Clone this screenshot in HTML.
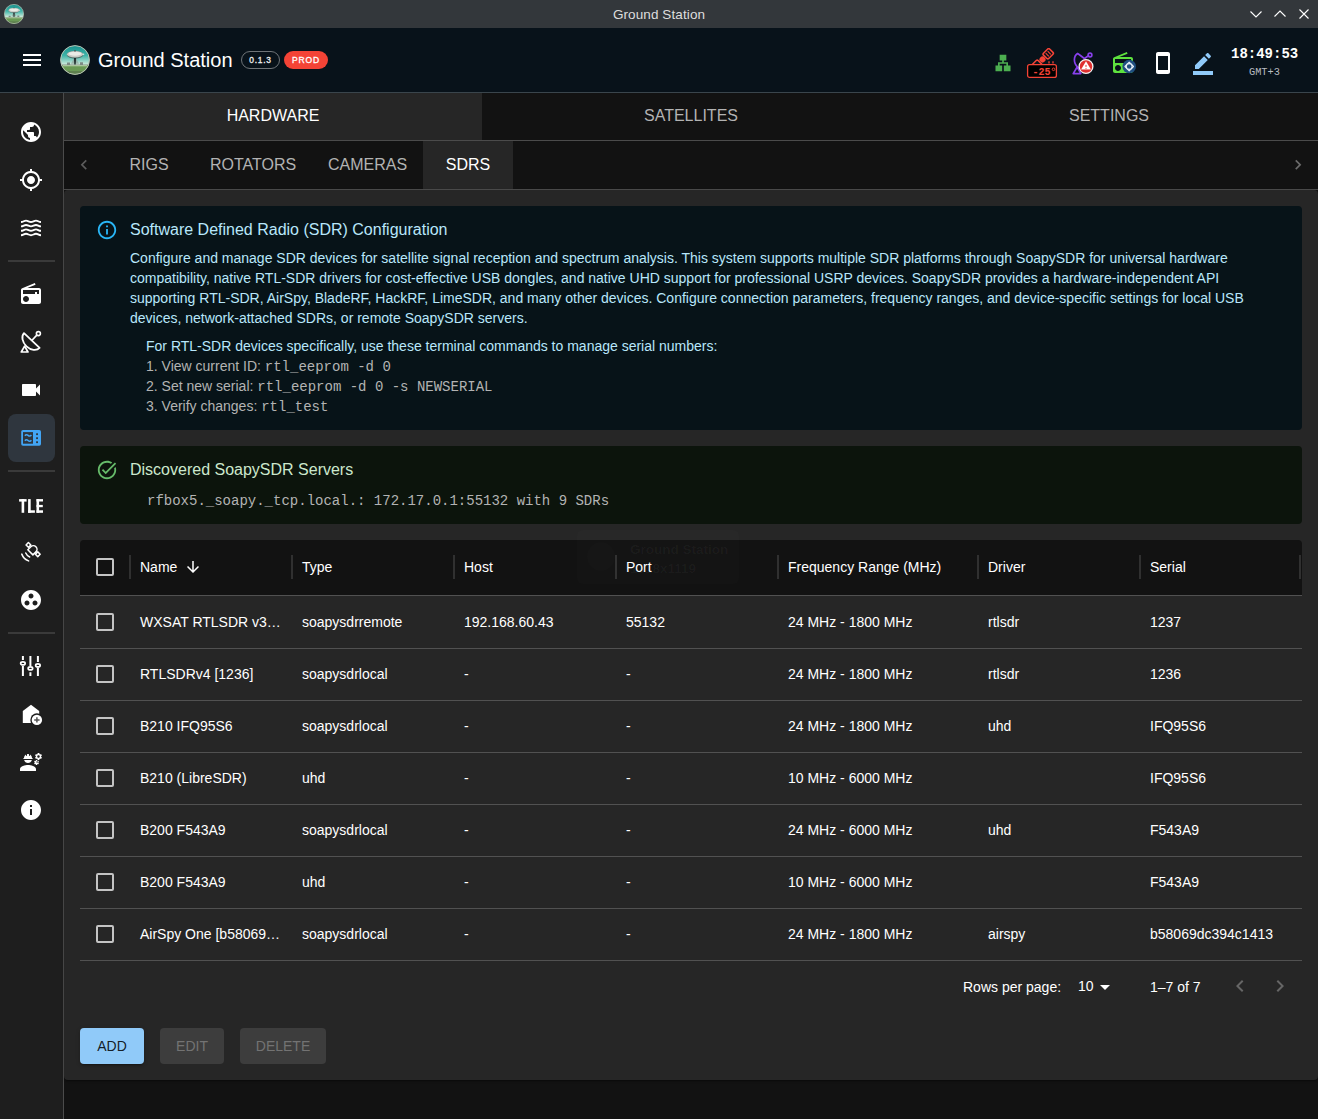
<!DOCTYPE html>
<html><head><meta charset="utf-8">
<style>
*{box-sizing:border-box;margin:0;padding:0}
html,body{width:1318px;height:1119px;overflow:hidden;background:#121212;font-family:"Liberation Sans",sans-serif;color:#fff}
.abs{position:absolute}
svg{display:block}
#titlebar{left:0;top:0;width:1318px;height:28px;background:#33373b}
#titlebar .t{position:absolute;left:0;width:1318px;top:7px;text-align:center;font-size:13.5px;color:#dedede;letter-spacing:0.1px}
#header{left:0;top:28px;width:1318px;height:65px;background:#08121a;border-bottom:1px solid #3a454c}
#sidebar{left:0;top:93px;width:64px;height:1026px;background:#1e1e1e;border-right:1px solid #4b4b4b}
.sdiv{position:absolute;left:8px;width:47px;height:2px;background:#3a3a3a}
.sic{position:absolute;left:21px;width:20px;height:20px}
#tabs{left:64px;top:93px;width:1254px;height:48px;background:#121212;border-bottom:1px solid #4b4b4b}
.tab{position:absolute;top:0;height:47px;line-height:46px;text-align:center;font-size:16px;color:#b3b3b3}
#subtabs{left:64px;top:141px;width:1254px;height:49px;background:#121212;border-bottom:1px solid #4b4b4b}
.stab{position:absolute;top:0;height:48px;line-height:48px;text-align:center;font-size:16px;color:#b3b3b3}
#card{left:64px;top:190px;width:1254px;height:890px;background:#262626;border-radius:4px;box-shadow:0 2px 1px -1px rgba(0,0,0,0.2),0 1px 1px 0 rgba(0,0,0,0.14),0 1px 3px 0 rgba(0,0,0,0.12)}
.alert{position:absolute;left:16px;width:1222px;border-radius:4px}
.mono{font-family:"Liberation Mono",monospace}
table{border-collapse:collapse}
.th{position:absolute;top:-1px;height:56px;line-height:56px;font-size:14px;color:#fff}
.row{position:absolute;left:0;width:1222px;height:52px}
.rl{position:absolute;left:0;width:1222px;height:1px;background:#515151}
.cell{position:absolute;top:0;line-height:52px;font-size:14px;color:#fff;white-space:nowrap}
.cb{position:absolute;left:16px;width:18px;height:18px;border:2px solid #c4c4c4;border-radius:2px}
.btn{position:absolute;top:838px;height:36px;line-height:36px;border-radius:4px;font-size:14px;text-align:center}
</style></head><body>
<svg width="0" height="0" style="position:absolute"><defs>
    
      <linearGradient id="sky" x1="0" y1="0" x2="0" y2="1"><stop offset="0" stop-color="#168f8c"/><stop offset="0.35" stop-color="#3fb3a8"/><stop offset="0.62" stop-color="#bfe6d6"/><stop offset="0.68" stop-color="#e8f2e4"/><stop offset="0.72" stop-color="#b9d6a6"/><stop offset="1" stop-color="#3f7d33"/></linearGradient>
      <clipPath id="lc"><circle cx="15" cy="15" r="14.5"/></clipPath>
    
    <symbol id="logo" viewBox="0 0 30 30"><g clip-path="url(#lc)">
      <rect width="30" height="30" fill="url(#sky)"/>
      <path d="M2 19.5 h5 v-2 h3 v2 h10 v-2.2 h3 v2.2 h5 v1.2 H2z" fill="#7d8a84"/>
      <path d="M11 18.8 L14 13 L16 13 L19 18.8z" fill="#8fa39a" opacity=".7"/>
      <ellipse cx="15" cy="9.8" rx="8.2" ry="3.9" fill="#4d6e6a"/>
      <ellipse cx="15" cy="9.2" rx="8" ry="3.2" fill="#c9ccc6"/>
      <ellipse cx="15" cy="8.7" rx="6.5" ry="2" fill="#e9ebe6"/>
      <circle cx="15" cy="5.8" r="0.9" fill="#4a5a56"/>
      <circle cx="23.5" cy="9.2" r="0.8" fill="#d8e6df"/>
      <path d="M14 13 h2 l-0.3 6.5 h-1.4z" fill="#1d2b2a"/>
      <path d="M2 20.3 h26 v10 H2z" fill="#6a9a55"/>
      <path d="M3 20.2 h24 v1 H3z" fill="#cfe3c6" opacity=".8"/>
      <path d="M4 26 h22 v4 H4z" fill="#55704a" opacity=".6"/>
    </g>
    <circle cx="15" cy="15" r="14.4" fill="none" stroke="#b9c2b4" stroke-width="1"/>
  </symbol></defs></svg>
<div id="titlebar" class="abs"><div class="t">Ground Station</div>
  <svg class="abs" style="left:4px;top:4px" width="20" height="20" viewBox="0 0 30 30"><use href="#logo"/></svg>
  <svg class="abs" style="left:1246px;top:6px" width="70" height="16" viewBox="0 0 70 16">
    <path d="M4.5 5.5 L10 11 L15.5 5.5" fill="none" stroke="#fff" stroke-width="1.1"/>
    <path d="M28.5 10.5 L34 5 L39.5 10.5" fill="none" stroke="#fff" stroke-width="1.1"/>
    <path d="M53.5 3.5 L62.5 12.5 M62.5 3.5 L53.5 12.5" fill="none" stroke="#fff" stroke-width="1.1"/>
  </svg>
</div>
<div id="header" class="abs">
  <svg class="abs" style="left:20px;top:20px" width="24" height="24" viewBox="0 0 24 24"><path fill="#fff" d="M3 18h18v-2H3v2zm0-5h18v-2H3v2zm0-7v2h18V6H3z"/></svg>
  <svg class="abs" style="left:60px;top:17px" width="30" height="30" viewBox="0 0 30 30"><use href="#logo"/></svg>
  <div class="abs" style="left:98px;top:21.5px;font-size:20px;line-height:20px;color:#fff;white-space:nowrap">Ground Station</div>
  <div class="abs" style="left:241px;top:23px;width:39px;height:18px;border:1px solid #6f7478;border-radius:9px;font-size:8.4px;font-weight:normal;-webkit-text-stroke:0.3px #f0f0f0;letter-spacing:0.75px;line-height:16.6px;text-align:center;color:#f0f0f0">0.1.3</div>
  <div class="abs" style="left:284px;top:23px;width:44px;height:18px;background:#f44336;border-radius:9px;font-size:8.5px;font-weight:normal;-webkit-text-stroke:0.3px #fff;letter-spacing:0.85px;line-height:18.6px;text-align:center;color:#fff">PROD</div>
  <!-- lan -->
  <svg class="abs" style="left:993px;top:25px" width="20" height="20" viewBox="0 0 24 24"><path fill="#4caf50" d="M13 22h8v-7h-3v-4h-5V9h3V2H8v7h3v2H6v4H3v7h8v-7H8v-2h8v2h-3z"/></svg>
  <!-- satellite -25 -->
  <svg class="abs" style="left:1026px;top:20px" width="32" height="32" viewBox="0 0 32 32">
    <g transform="rotate(-45 16.5 11.5)">
      <rect x="20.3" y="7.8" width="8.6" height="7.4" rx="1.3" fill="none" stroke="#f44336" stroke-width="1.6"/>
      <path d="M23.2 9.3v4.4M26 9.3v4.4" stroke="#f44336" stroke-width="1.1"/>
      <circle cx="16.5" cy="11.5" r="3" fill="#f44336"/>
      <rect x="4.1" y="7.8" width="8.6" height="7.4" rx="1.3" fill="none" stroke="#f44336" stroke-width="1.6"/>
    </g>
    <path d="M23 13.2v2.4M27 13.2v2.4" stroke="#f44336" stroke-width="1.3"/>
    <rect x="1.6" y="16.6" width="28.8" height="12.8" rx="2" fill="#000" stroke="#f44336" stroke-width="1.3"/>
    <text x="6.6" y="26.9" font-family="Liberation Mono" font-weight="bold" font-size="10" fill="#f44336">-25</text>
    <circle cx="27.5" cy="21.3" r="1.3" fill="none" stroke="#f44336" stroke-width="0.9"/>
  </svg>
  <!-- dish warning -->
  <svg class="abs" style="left:1072px;top:24px" width="24" height="24" viewBox="0 0 24 24">
    <path d="M5.6 1.6 C1.5 4 1 11 6 15.5 C8 17 10.5 15 12.5 12.5" fill="none" stroke="#8840ec" stroke-width="1.7" stroke-linecap="round"/>
    <path d="M5.6 1.6 C8 3 10 5 12.5 6.5 C14 5.5 15.5 4.5 16.5 3.8" fill="none" stroke="#8840ec" stroke-width="1.7" stroke-linecap="round"/>
    <circle cx="18" cy="3" r="1.9" fill="none" stroke="#8840ec" stroke-width="1.6"/>
    <path d="M1.2 21.6 L5.2 15 L8.8 21.6z" fill="none" stroke="#8840ec" stroke-width="1.7" stroke-linejoin="round"/>
    <circle cx="14" cy="14.5" r="6.9" fill="#e03030" stroke="#f4f4f4" stroke-width="1.3"/>
    <path d="M14 9.3 L18.9 17.6 L9.1 17.6z" fill="#fff"/>
    <rect x="9.6" y="17.9" width="8.8" height="1.4" fill="#e03030"/>
    <path d="M14 12.9 v2 M14 15.9 v0.9" stroke="#e03030" stroke-width="1"/>
  </svg>
  <!-- radio target -->
  <svg class="abs" style="left:1111px;top:23px" width="26" height="24" viewBox="0 0 26 24">
    <path fill="#5ee23e" d="M3.24 6.15C2.51 6.43 2 7.17 2 8v12c0 1.1.89 2 2 2h16c1.11 0 2-.9 2-2V8c0-1.11-.89-2-2-2H8.3l8.26-3.34L15.88 1 3.24 6.15zM7 20c-1.66 0-3-1.34-3-3s1.34-3 3-3 3 1.34 3 3-1.34 3-3 3zm13-8h-2v-2h-2v2H4V8h16v4z"/>
    <rect x="15.5" y="9.5" width="3" height="3" fill="#08121a"/>
    <circle cx="18.2" cy="15.5" r="6.8" fill="#1f4f80"/>
    <path d="M18.2 11.2 L22.5 15.5 L18.2 19.8 L13.9 15.5z" fill="none" stroke="#e8f0f8" stroke-width="1.1" stroke-linejoin="round"/>
    <circle cx="18.2" cy="15.5" r="2.9" fill="#1f4f80" stroke="#e8f0f8" stroke-width="1.1"/>
  </svg>
  <!-- phone -->
  <svg class="abs" style="left:1151px;top:23px" width="24" height="24" viewBox="0 0 24 24"><path fill="#fff" d="M17 1.01 7 1c-1.1 0-1.99.9-1.99 2v18c0 1.1.89 2 1.99 2h10c1.1 0 2-.9 2-2V3c0-1.1-.9-1.99-2-1.99zM17 19H7V5h10v14z"/></svg>
  <!-- pencil -->
  <svg class="abs" style="left:1191px;top:22.5px" width="24" height="24" viewBox="0 0 24 24"><path fill="#90caf9" d="M22 24H2v-4h20v4zM13.06 5.19l3.75 3.75L7.75 18H4v-3.75l9.06-9.06zm4.82 2.68-3.75-3.75 1.83-1.83c.39-.39 1.02-.39 1.41 0l2.34 2.34c.39.39.39 1.02 0 1.41l-1.83 1.83z"/></svg>
  <div class="abs mono" style="left:1231px;top:18.7px;font-size:14px;line-height:14px;font-weight:bold;color:#fff;white-space:nowrap">18:49:53</div>
  <div class="abs mono" style="left:1249px;top:38.5px;font-size:10.3px;line-height:10px;color:#b8bcc0;white-space:nowrap">GMT+3</div>
</div>
<div id="sidebar" class="abs"><div class="abs" style="left:0;top:-1px;width:64px;height:1000px">
<svg class="abs" style="left:19.0px;top:28.0px" width="24" height="24" viewBox="0 0 24 24"><path fill="#fff" d="M12 2C6.48 2 2 6.48 2 12s4.48 10 10 10 10-4.48 10-10S17.52 2 12 2zm-1 17.93c-3.95-.49-7-3.85-7-7.93 0-.62.08-1.21.21-1.79L9 15v1c0 1.1.9 2 2 2v1.93zm6.9-2.54c-.26-.81-1-1.39-1.9-1.39h-1v-3c0-.55-.45-1-1-1H8v-2h2c.55 0 1-.45 1-1V7h2c1.1 0 2-.9 2-2v-.41c2.93 1.19 5 4.06 5 7.41 0 2.08-.8 3.97-2.1 5.39z"/></svg>
<svg class="abs" style="left:19.0px;top:76.0px" width="24" height="24" viewBox="0 0 24 24"><path fill="#fff" d="M12 8c-2.21 0-4 1.79-4 4s1.79 4 4 4 4-1.79 4-4-1.79-4-4-4zm8.94 3c-.46-4.17-3.77-7.48-7.94-7.94V1h-2v2.06C6.83 3.52 3.52 6.83 3.06 11H1v2h2.06c.46 4.17 3.77 7.48 7.94 7.94V23h2v-2.06c4.17-.46 7.48-3.77 7.94-7.94H23v-2h-2.06zM12 19c-3.87 0-7-3.13-7-7s3.13-7 7-7 7 3.13 7 7-3.13 7-7 7z"/></svg>
<svg class="abs" style="left:19.0px;top:124.0px" width="24" height="24" viewBox="0 0 24 24"><path d="M2 6.0 C4.5 6.0 5 4.6 7 4.6 C9 4.6 10 6.0 12 6.0 C14 6.0 15 4.6 17 4.6 C19 4.6 19.5 6.0 22 6.0" fill="none" stroke="#fff" stroke-width="1.9"/><path d="M2 10.4 C4.5 10.4 5 9.0 7 9.0 C9 9.0 10 10.4 12 10.4 C14 10.4 15 9.0 17 9.0 C19 9.0 19.5 10.4 22 10.4" fill="none" stroke="#fff" stroke-width="1.9"/><path d="M2 14.8 C4.5 14.8 5 13.4 7 13.4 C9 13.4 10 14.8 12 14.8 C14 14.8 15 13.4 17 13.4 C19 13.4 19.5 14.8 22 14.8" fill="none" stroke="#fff" stroke-width="1.9"/><path d="M2 19.2 C4.5 19.2 5 17.8 7 17.8 C9 17.8 10 19.2 12 19.2 C14 19.2 15 17.8 17 17.8 C19 17.8 19.5 19.2 22 19.2" fill="none" stroke="#fff" stroke-width="1.9"/></svg>
<div class="sdiv" style="top:168px"></div>
<svg class="abs" style="left:19.0px;top:190.0px" width="24" height="24" viewBox="0 0 24 24"><path fill="#fff" d="M3.24 6.15C2.51 6.43 2 7.17 2 8v12c0 1.1.89 2 2 2h16c1.11 0 2-.9 2-2V8c0-1.11-.89-2-2-2H8.3l8.26-3.34L15.88 1 3.24 6.15zM7 20c-1.66 0-3-1.34-3-3s1.34-3 3-3 3 1.34 3 3-1.34 3-3 3zm13-8h-2v-2h-2v2H4V8h16v4z"/></svg>
<svg class="abs" style="left:19.0px;top:238.0px" width="24" height="24" viewBox="0 0 24 24"><path d="M5 3.2 A10.6 7.8 44 0 0 20.6 17.8 Z" fill="none" stroke="#fff" stroke-width="1.8" stroke-linejoin="round"/>
<path d="M12.8 10.5 L17.8 5.2" stroke="#fff" stroke-width="1.7"/>
<circle cx="19.4" cy="3.6" r="2" fill="none" stroke="#fff" stroke-width="1.6"/>
<path d="M2.3 22 L5.6 16.2 L9 22z" fill="none" stroke="#fff" stroke-width="1.7" stroke-linejoin="round"/></svg>
<svg class="abs" style="left:19.0px;top:286.0px" width="24" height="24" viewBox="0 0 24 24"><path fill="#fff" d="M17 10.5V7c0-.55-.45-1-1-1H4c-.55 0-1 .45-1 1v10c0 .55.45 1 1 1h12c.55 0 1-.45 1-1v-3.5l4 4v-11l-4 4z"/></svg>
<div class="abs" style="left:8px;top:322px;width:47px;height:48px;border-radius:8px;background:#2f363e"></div>
<svg class="abs" style="left:19.0px;top:334.0px" width="24" height="24" viewBox="0 0 24 24"><rect x="2.2" y="4" width="19.8" height="15.8" rx="1.8" fill="#42a5f5"/>
<rect x="4" y="6.1" width="10" height="11.6" fill="#2f363e"/>
<rect x="17.1" y="7.3" width="1.9" height="1.8" fill="#2f363e"/><rect x="17.1" y="11.3" width="1.9" height="1.8" fill="#2f363e"/><rect x="17.1" y="15.3" width="1.9" height="1.8" fill="#2f363e"/>
<path d="M5.9 9.7 c1 -1.3 2.1 -1.3 3.2 -0.3 c1.1 1 2.2 1 3.3 -0.3 M5.9 14.8 c1 -1.3 2.1 -1.3 3.2 -0.3 c1.1 1 2.2 1 3.3 -0.3" fill="none" stroke="#42a5f5" stroke-width="1.5"/></svg>
<div class="sdiv" style="top:378px"></div>
<svg class="abs" style="left:0;top:398px" width="64" height="30" viewBox="0 490 64 30"><g fill="#fff">
<rect x="19.1" y="499.1" width="7.5" height="2.5"/><rect x="21.6" y="499.1" width="2.6" height="13.7"/>
<rect x="28.1" y="499.1" width="2.6" height="13.7"/><rect x="28.1" y="510.3" width="6.8" height="2.5"/>
<rect x="36.5" y="499.1" width="2.6" height="13.7"/><rect x="36.5" y="499.1" width="6.5" height="2.4"/><rect x="36.5" y="504.9" width="6.3" height="2.3"/><rect x="36.5" y="510.3" width="6.5" height="2.5"/>
</g></svg>
<svg class="abs" style="left:19.0px;top:448.0px" width="24" height="24" viewBox="0 0 24 24"><g transform="translate(14.1 9.6) rotate(45)" fill="none" stroke="#fff" stroke-width="1.5" stroke-linejoin="round">
<path d="M-3.6 3.9 H3.6 V-0.4 A3.6 3.6 0 0 0 -3.6 -0.4 Z"/>
<rect x="-8.3" y="-1.7" width="3.4" height="3.4"/>
<rect x="4.9" y="-1.7" width="3.4" height="3.4"/>
<path d="M-2.8 7.6 A7.5 7.5 0 0 0 2.8 7.6" stroke-linecap="round"/>
<path d="M-4.8 11.2 A11.5 11.5 0 0 0 4.8 11.2" stroke-linecap="round"/>
</g></svg>
<svg class="abs" style="left:19.0px;top:496.0px" width="24" height="24" viewBox="0 0 24 24"><path fill="#fff" d="M12 2C6.48 2 2 6.48 2 12s4.48 10 10 10 10-4.48 10-10S17.52 2 12 2zM8 17.5c-1.38 0-2.5-1.12-2.5-2.5s1.12-2.5 2.5-2.5 2.5 1.12 2.5 2.5-1.12 2.5-2.5 2.5zM9.5 8c0-1.38 1.12-2.5 2.5-2.5s2.5 1.12 2.5 2.5-1.12 2.5-2.5 2.5S9.5 9.38 9.5 8zm6.5 9.5c-1.38 0-2.5-1.12-2.5-2.5s1.12-2.5 2.5-2.5 2.5 1.12 2.5 2.5-1.12 2.5-2.5 2.5z"/></svg>
<div class="sdiv" style="top:540px"></div>
<svg class="abs" style="left:19.0px;top:562.0px" width="24" height="24" viewBox="0 0 24 24"><path d="M3.9 2v3.9M3.9 12v10M11.4 2v10.2M11.4 18.2v3.8M18.9 2v5.9M18.9 13.6v8.4" stroke="#fff" stroke-width="2"/>
<ellipse cx="3.9" cy="9.4" rx="2.25" ry="1.55" fill="none" stroke="#fff" stroke-width="1.7"/>
<ellipse cx="11.4" cy="14.4" rx="2.25" ry="1.55" fill="none" stroke="#fff" stroke-width="1.7"/>
<ellipse cx="18.9" cy="11.4" rx="2.25" ry="1.55" fill="none" stroke="#fff" stroke-width="1.7"/></svg>
<svg class="abs" style="left:20.0px;top:611.0px" width="24" height="24" viewBox="0 0 24 24"><path fill="#fff" d="M2.8 8 L11 1.8 L19.2 8 V20 H2.8z"/><circle cx="16.9" cy="16.9" r="6.6" fill="#1e1e1e"/>
<circle cx="16.9" cy="16.9" r="5.2" fill="#fff"/>
<path d="M16.9 14.2v5.4M14.2 16.9h5.4" stroke="#555" stroke-width="1.5"/></svg>
<svg class="abs" style="left:19.0px;top:658.0px" width="24" height="24" viewBox="0 0 24 24"><path fill="#fff" d="M9 15c-2.67 0-8 1.34-8 4v2h16v-2c0-2.66-5.33-4-8-4zm13.1-8.16c.01-.11.02-.22.02-.34 0-.12-.01-.23-.03-.34l.74-.58c.07-.05.08-.15.04-.22l-.7-1.21c-.04-.08-.14-.1-.21-.08l-.86.35c-.18-.14-.38-.25-.59-.34l-.13-.93c-.02-.09-.09-.15-.18-.15h-1.4c-.09 0-.16.06-.17.15l-.13.93c-.21.09-.41.21-.59.34l-.87-.35c-.08-.03-.17 0-.21.08l-.7 1.21c-.04.08-.03.17.04.22l.74.58c-.02.11-.03.23-.03.34 0 .11.01.23.03.34l-.74.58c-.07.05-.08.15-.04.22l.7 1.21c.04.08.14.1.21.08l.87-.35c.18.14.38.25.59.34l.13.93c.01.09.08.15.17.15h1.4c.09 0 .16-.06.17-.15l.13-.93c.21-.09.41-.21.59-.34l.87.35c.08.03.17 0 .21-.08l.7-1.21c.04-.08.03-.17-.04-.22l-.73-.58zm-2.6.91c-.69 0-1.25-.56-1.25-1.25s.56-1.25 1.25-1.25 1.25.56 1.25 1.25-.56 1.25-1.25 1.25zm.42 3.93-.5-.87c-.03-.06-.1-.08-.15-.06l-.62.25c-.13-.1-.27-.18-.42-.24l-.09-.66c-.02-.06-.08-.1-.14-.1h-1c-.06 0-.11.04-.12.11l-.09.66c-.15.06-.29.15-.42.24l-.62-.25c-.06-.02-.12 0-.15.06l-.5.87c-.03.06-.02.12.03.16l.53.41c-.01.08-.02.16-.02.24 0 .08.01.17.02.24l-.53.41c-.05.04-.06.11-.03.16l.5.87c.03.06.1.08.15.06l.62-.25c.13.1.27.18.42.24l.09.66c.01.07.06.11.12.11h1c.06 0 .12-.04.12-.11l.09-.66c.15-.06.29-.15.42-.24l.62.25c.06.02.12 0 .15-.06l.5-.87c.03-.06.02-.12-.03-.16l-.52-.41c.01-.08.02-.16.02-.24 0-.08-.01-.17-.02-.24l.53-.41c.05-.04.06-.11.04-.17zm-1.81 1.1c-.45 0-.81-.37-.81-.81 0-.45.37-.81.81-.81s.81.37.81.81c0 .45-.36.81-.81.81zM4.74 9h8.53c.27 0 .49-.2.52-.46V8.53c0-.28-.22-.5-.5-.5H13c0-1.48-.81-2.75-2-3.45v.95c0 .28-.22.5-.5.5s-.5-.22-.5-.5V4.14C9.68 4.06 9.35 4 9 4s-.68.06-1 .14V5.5c0 .28-.22.5-.5.5S7 5.78 7 5.5V4.58c-1.19.7-2 1.97-2 3.45h-.26c-.28 0-.5.22-.5.5v.01c0 .26.22.46.5.46zM9 13c1.86 0 3.41-1.28 3.86-3H5.14c.45 1.72 2 3 3.86 3z"/></svg>
<svg class="abs" style="left:19.0px;top:706.0px" width="24" height="24" viewBox="0 0 24 24"><path fill="#fff" d="M12 2C6.48 2 2 6.48 2 12s4.48 10 10 10 10-4.48 10-10S17.52 2 12 2zm1 15h-2v-6h2v6zm0-8h-2V7h2v2z"/></svg>
</div></div>
<div id="tabs" class="abs">
  <div class="tab" style="left:0;width:418px;background:#262626;color:#fff">HARDWARE</div>
  <div class="tab" style="left:418px;width:418px">SATELLITES</div>
  <div class="tab" style="left:836px;width:418px">SETTINGS</div>
</div>
<div id="subtabs" class="abs">
  <svg class="abs" style="left:8px;top:12px" width="24" height="24" viewBox="0 0 24 24"><path fill="#5c5c5c" d="M15.41 16.59 10.83 12l4.58-4.59L14 6l-6 6 6 6 1.41-1.41z" transform="translate(12 11.7) scale(0.83) translate(-12 -12)"/></svg>
  <div class="stab" style="left:40px;width:90px">RIGS</div>
  <div class="stab" style="left:130px;width:118px">ROTATORS</div>
  <div class="stab" style="left:248px;width:111px">CAMERAS</div>
  <div class="stab" style="left:359px;width:90px;background:#262626;color:#fff">SDRS</div>
  <svg class="abs" style="left:1222px;top:12px" width="24" height="24" viewBox="0 0 24 24"><path fill="#6b6b6b" d="M8.59 16.59 13.17 12 8.59 7.41 10 6l6 6-6 6-1.41-1.41z" transform="translate(12 11.7) scale(0.83) translate(-12 -12)"/></svg>
</div>
<div id="card" class="abs">
<div class="alert" style="top:16px;height:224px;background:#071318">
  <svg class="abs" style="left:16px;top:13px" width="22" height="22" viewBox="0 0 24 24"><path fill="#29b6f6" d="M11 7h2v2h-2zm0 4h2v6h-2zm1-9C6.48 2 2 6.48 2 12s4.48 10 10 10 10-4.48 10-10S17.52 2 12 2zm0 18c-4.41 0-8-3.59-8-8s3.59-8 8-8 8 3.59 8 8-3.59 8-8 8z"/></svg>
  <div class="abs" style="left:50px;top:12px;font-size:16px;line-height:24px;color:#b8e7fb;white-space:nowrap">Software Defined Radio (SDR) Configuration</div>
  <div class="abs" style="left:50px;top:42px;width:1140px;font-size:14px;line-height:20px;color:#b8e7fb">Configure and manage SDR devices for satellite signal reception and spectrum analysis. This system supports multiple SDR platforms through SoapySDR for universal hardware compatibility, native RTL-SDR drivers for cost-effective USB dongles, and native UHD support for professional USRP devices. SoapySDR provides a hardware-independent API supporting RTL-SDR, AirSpy, BladeRF, HackRF, LimeSDR, and many other devices. Configure connection parameters, frequency ranges, and device-specific settings for local USB devices, network-attached SDRs, or remote SoapySDR servers.</div>
  <div class="abs" style="left:66px;top:130px;font-size:14px;line-height:20px;color:#b8e7fb;white-space:nowrap">For RTL-SDR devices specifically, use these terminal commands to manage serial numbers:</div>
  <div class="abs" style="left:66px;top:150px;height:20px;font-size:14px;line-height:20px;color:#b3b3b3;white-space:nowrap">1. View current ID: <span class="mono" style="line-height:10px">rtl_eeprom -d 0</span></div>
  <div class="abs" style="left:66px;top:170px;height:20px;font-size:14px;line-height:20px;color:#b3b3b3;white-space:nowrap">2. Set new serial: <span class="mono" style="line-height:10px">rtl_eeprom -d 0 -s NEWSERIAL</span></div>
  <div class="abs" style="left:66px;top:190px;height:20px;font-size:14px;line-height:20px;color:#b3b3b3;white-space:nowrap">3. Verify changes: <span class="mono" style="line-height:10px">rtl_test</span></div>
</div>
<div class="alert" style="top:256px;height:78px;background:#0c140c">
  <svg class="abs" style="left:16px;top:13px" width="22" height="22" viewBox="0 0 24 24"><path fill="#66bb6a" d="M22 5.18 10.59 16.6l-4.24-4.24 1.41-1.41 2.83 2.83 10-10L22 5.18zm-2.21 5.04c.13.57.21 1.17.21 1.78 0 4.42-3.58 8-8 8s-8-3.58-8-8 3.58-8 8-8c1.58 0 3.04.46 4.28 1.25l1.44-1.44C16.1 2.67 14.13 2 12 2 6.48 2 2 6.48 2 12s4.48 10 10 10 10-4.48 10-10c0-1.19-.22-2.33-.6-3.39l-1.61 1.61z"/></svg>
  <div class="abs" style="left:50px;top:12px;font-size:16px;line-height:24px;color:#cce8cd;white-space:nowrap">Discovered SoapySDR Servers</div>
  <div class="abs mono" style="left:67px;top:45px;font-size:14px;line-height:20px;color:#b3b3b3;white-space:nowrap">rfbox5._soapy._tcp.local.: 172.17.0.1:55132 with 9 SDRs</div>
</div>
<div class="abs" style="left:16px;top:350px;width:1222px;height:610px">
<div class="abs" style="left:0;top:0;width:1222px;height:56px;background:#121212;border-radius:4px 4px 0 0;border-bottom:1px solid #515151"></div>
<div class="cb" style="top:18px"></div>
<div class="abs" style="left:49px;top:15px;width:2px;height:24px;background:#303030"></div>
<div class="th" style="left:60px">Name</div>
<div class="abs" style="left:211px;top:15px;width:2px;height:24px;background:#303030"></div>
<div class="th" style="left:222px">Type</div>
<div class="abs" style="left:373px;top:15px;width:2px;height:24px;background:#303030"></div>
<div class="th" style="left:384px">Host</div>
<div class="abs" style="left:535px;top:15px;width:2px;height:24px;background:#303030"></div>
<div class="th" style="left:546px">Port</div>
<div class="abs" style="left:697px;top:15px;width:2px;height:24px;background:#303030"></div>
<div class="th" style="left:708px">Frequency Range (MHz)</div>
<div class="abs" style="left:897px;top:15px;width:2px;height:24px;background:#303030"></div>
<div class="th" style="left:908px">Driver</div>
<div class="abs" style="left:1059px;top:15px;width:2px;height:24px;background:#303030"></div>
<div class="th" style="left:1070px">Serial</div>
<div class="abs" style="left:1219px;top:15px;width:2px;height:24px;background:#303030"></div>
<svg class="abs" style="left:104px;top:18px" width="18" height="18" viewBox="0 0 24 24"><path fill="#fff" d="M20 12l-1.41-1.41L13 16.17V4h-2v12.17l-5.58-5.59L4 12l8 8 8-8z"/></svg>
<div class="row" style="top:56px">
<div class="cb" style="top:17px"></div>
<div class="cell" style="left:60px">WXSAT RTLSDR v3…</div><div class="cell" style="left:222px">soapysdrremote</div><div class="cell" style="left:384px">192.168.60.43</div><div class="cell" style="left:546px">55132</div><div class="cell" style="left:708px">24 MHz - 1800 MHz</div><div class="cell" style="left:908px">rtlsdr</div><div class="cell" style="left:1070px">1237</div>
</div>
<div class="rl" style="top:108px"></div>
<div class="row" style="top:108px">
<div class="cb" style="top:17px"></div>
<div class="cell" style="left:60px">RTLSDRv4 [1236]</div><div class="cell" style="left:222px">soapysdrlocal</div><div class="cell" style="left:384px">-</div><div class="cell" style="left:546px">-</div><div class="cell" style="left:708px">24 MHz - 1800 MHz</div><div class="cell" style="left:908px">rtlsdr</div><div class="cell" style="left:1070px">1236</div>
</div>
<div class="rl" style="top:160px"></div>
<div class="row" style="top:160px">
<div class="cb" style="top:17px"></div>
<div class="cell" style="left:60px">B210 IFQ95S6</div><div class="cell" style="left:222px">soapysdrlocal</div><div class="cell" style="left:384px">-</div><div class="cell" style="left:546px">-</div><div class="cell" style="left:708px">24 MHz - 1800 MHz</div><div class="cell" style="left:908px">uhd</div><div class="cell" style="left:1070px">IFQ95S6</div>
</div>
<div class="rl" style="top:212px"></div>
<div class="row" style="top:212px">
<div class="cb" style="top:17px"></div>
<div class="cell" style="left:60px">B210 (LibreSDR)</div><div class="cell" style="left:222px">uhd</div><div class="cell" style="left:384px">-</div><div class="cell" style="left:546px">-</div><div class="cell" style="left:708px">10 MHz - 6000 MHz</div><div class="cell" style="left:908px"></div><div class="cell" style="left:1070px">IFQ95S6</div>
</div>
<div class="rl" style="top:264px"></div>
<div class="row" style="top:264px">
<div class="cb" style="top:17px"></div>
<div class="cell" style="left:60px">B200 F543A9</div><div class="cell" style="left:222px">soapysdrlocal</div><div class="cell" style="left:384px">-</div><div class="cell" style="left:546px">-</div><div class="cell" style="left:708px">24 MHz - 6000 MHz</div><div class="cell" style="left:908px">uhd</div><div class="cell" style="left:1070px">F543A9</div>
</div>
<div class="rl" style="top:316px"></div>
<div class="row" style="top:316px">
<div class="cb" style="top:17px"></div>
<div class="cell" style="left:60px">B200 F543A9</div><div class="cell" style="left:222px">uhd</div><div class="cell" style="left:384px">-</div><div class="cell" style="left:546px">-</div><div class="cell" style="left:708px">10 MHz - 6000 MHz</div><div class="cell" style="left:908px"></div><div class="cell" style="left:1070px">F543A9</div>
</div>
<div class="rl" style="top:368px"></div>
<div class="row" style="top:368px">
<div class="cb" style="top:17px"></div>
<div class="cell" style="left:60px">AirSpy One [b58069…</div><div class="cell" style="left:222px">soapysdrlocal</div><div class="cell" style="left:384px">-</div><div class="cell" style="left:546px">-</div><div class="cell" style="left:708px">24 MHz - 1800 MHz</div><div class="cell" style="left:908px">airspy</div><div class="cell" style="left:1070px">b58069dc394c1413</div>
</div>
<div class="rl" style="top:420px"></div>
</div>
<div class="abs" style="left:899px;top:771px;font-size:14px;line-height:52px;color:#fff;white-space:nowrap">Rows per page:</div>
<div class="abs" style="left:1014px;top:770px;font-size:14px;line-height:52px;color:#fff;white-space:nowrap">10</div>
<svg class="abs" style="left:1029px;top:785px" width="24" height="24" viewBox="0 0 24 24"><path fill="#fff" d="M7 10l5 5 5-5z"/></svg>
<div class="abs" style="left:1086px;top:771px;font-size:14px;line-height:52px;color:#fff;white-space:nowrap">1–7 of 7</div>
<svg class="abs" style="left:1164px;top:784px" width="24" height="24" viewBox="0 0 24 24"><path fill="#666" d="M15.41 16.59 10.83 12l4.58-4.59L14 6l-6 6 6 6 1.41-1.41z"/></svg>
<svg class="abs" style="left:1204px;top:784px" width="24" height="24" viewBox="0 0 24 24"><path fill="#666" d="M8.59 16.59 13.17 12 8.59 7.41 10 6l6 6-6 6-1.41-1.41z"/></svg>
<div class="btn" style="left:16px;width:64px;background:#90caf9;color:rgba(0,0,0,0.87);box-shadow:0 3px 1px -2px rgba(0,0,0,0.2),0 2px 2px 0 rgba(0,0,0,0.14),0 1px 5px 0 rgba(0,0,0,0.12)">ADD</div>
<div class="btn" style="left:96px;width:64px;background:#3d3d3d;color:#737373">EDIT</div>
<div class="btn" style="left:176px;width:86px;background:#3d3d3d;color:#737373">DELETE</div>
</div>
<div class="abs" style="left:577px;top:530px;width:162px;height:54px;border-radius:6px;background:rgba(255,255,255,0.01)">
  <div class="abs" style="left:10px;top:12px;width:28px;height:29px;border-radius:50%;background:rgba(255,255,255,0.012)"></div>
  <div class="abs" style="left:53px;top:12px;font-size:13.5px;font-weight:bold;line-height:16px;color:rgba(255,255,255,0.04);white-space:nowrap">Ground Station</div>
  <div class="abs" style="left:53px;top:31px;font-size:13.5px;font-weight:bold;line-height:16px;color:rgba(255,255,255,0.035);white-space:nowrap">1318x1119</div>
</div>
</body></html>
